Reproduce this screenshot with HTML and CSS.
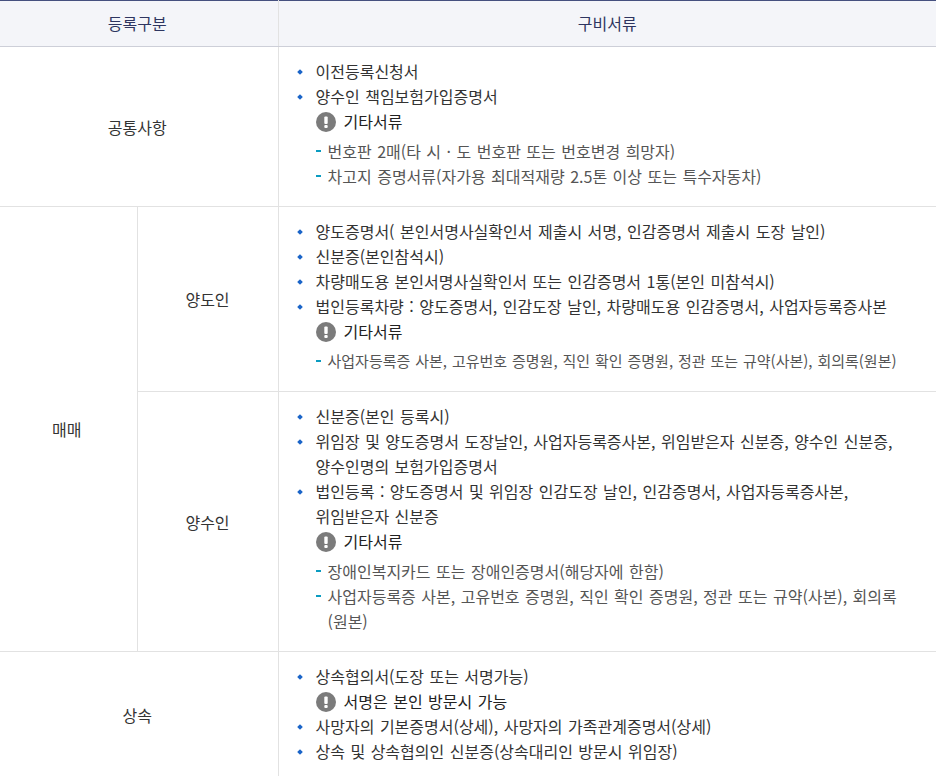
FILE: index.html
```html
<!DOCTYPE html>
<html lang="ko">
<head>
<meta charset="utf-8">
<title>구비서류</title>
<link rel="stylesheet" href="styles.css">
</head>
<body>
<svg class="defs" width="0" height="0" aria-hidden="true"><symbol id="warn" viewBox="0 0 20 20"><circle cx="10" cy="10" r="10" fill="#7b7b7b"/><rect x="8.3" y="4.5" width="3.4" height="7.5" rx="1" fill="#fff"/><rect x="8.3" y="13" width="3.4" height="3" rx="1" fill="#fff"/></symbol></svg>
<table class="docs">
<colgroup><col class="c1"><col class="c2"><col class="c3"></colgroup>
<thead>
<tr><th colspan="2">등록구분</th><th>구비서류</th></tr>
</thead>
<tbody>
<tr>
<td colspan="2" class="label">공통사항</td>
<td class="content">
<ul class="dots"><li>이전등록신청서</li><li>양수인 책임보험가입증명서</li></ul>
<p class="note"><svg class="ic"><use href="#warn"/></svg>기타서류</p>
<ul class="dashes"><li>번호판 2매(타 시 · 도 번호판 또는 번호변경 희망자)</li><li>차고지 증명서류(자가용 최대적재량 2.5톤 이상 또는 특수자동차)</li></ul>
</td>
</tr>
<tr>
<td rowspan="2" class="label">매매</td>
<td class="label bl">양도인</td>
<td class="content">
<ul class="dots"><li>양도증명서( 본인서명사실확인서 제출시 서명, 인감증명서 제출시 도장 날인)</li><li>신분증(본인참석시)</li><li>차량매도용 본인서명사실확인서 또는 인감증명서 1통(본인 미참석시)</li><li>법인등록차량 : 양도증명서, 인감도장 날인, 차량매도용 인감증명서, 사업자등록증사본</li></ul>
<p class="note"><svg class="ic"><use href="#warn"/></svg>기타서류</p>
<ul class="dashes small"><li>사업자등록증 사본, 고유번호 증명원, 직인 확인 증명원, 정관 또는 규약(사본), 회의록(원본)</li></ul>
</td>
</tr>
<tr>
<td class="label bl">양수인</td>
<td class="content">
<ul class="dots"><li>신분증(본인 등록시)</li><li>위임장 및 양도증명서 도장날인, 사업자등록증사본, 위임받은자 신분증, 양수인 신분증,<br>양수인명의 보험가입증명서</li><li>법인등록 : 양도증명서 및 위임장 인감도장 날인, 인감증명서, 사업자등록증사본,<br>위임받은자 신분증</li></ul>
<p class="note"><svg class="ic"><use href="#warn"/></svg>기타서류</p>
<ul class="dashes"><li>장애인복지카드 또는 장애인증명서(해당자에 한함)</li><li>사업자등록증 사본, 고유번호 증명원, 직인 확인 증명원, 정관 또는 규약(사본), 회의록<br>(원본)</li></ul>
</td>
</tr>
<tr>
<td colspan="2" class="label">상속</td>
<td class="content">
<ul class="dots"><li>상속협의서(도장 또는 서명가능)</li></ul>
<p class="note"><svg class="ic"><use href="#warn"/></svg>서명은 본인 방문시 가능</p>
<ul class="dots"><li>사망자의 기본증명서(상세), 사망자의 가족관계증명서(상세)</li><li>상속 및 상속협의인 신분증(상속대리인 방문시 위임장)</li></ul>
</td>
</tr>
</tbody>
</table>
</body>
</html>
```
FILE: styles.css
```css
html, body { margin: 0; padding: 0; background: #fff; }
body { width: 945px; height: 776px; overflow: hidden; font-family: "Noto Sans CJK KR", "Noto Sans", sans-serif; font-size: 16px; color: #333; word-spacing: 1px; }
.defs { position: absolute; }
.docs { width: 936px; border-collapse: collapse; table-layout: fixed; border-top: 1px solid #45507f; }
.c1 { width: 137px; }
.c2 { width: 141px; }
th { height: 43px; padding: 0 0 2px; background: #f4f5f9; font-weight: 400; font-size: 16px; color: #2e3560; text-align: center; border-bottom: 1px solid #cdcfd8; border-left: 1px solid #e2e2e2; }
th:first-child { border-left: 0; padding-right: 3px; }
td { padding: 0; border-bottom: 1px solid #e2e2e2; border-left: 1px solid #e2e2e2; }
td:first-child { border-left: 0; padding-right: 3px; }
td.bl { border-left: 1px solid #e2e2e2; padding-right: 0; }
.label { text-align: center; font-size: 16px; color: #333; }
.content { padding: 12px 18px 13px 18px; line-height: 25px; color: #333; }
ul { list-style: none; margin: 0; padding: 0; }
.dots li { position: relative; padding-left: 19px; }
.dots li::before { content: ""; position: absolute; left: 1px; top: 11px; width: 4px; height: 4px; background: #1a64c8; transform: rotate(45deg); }
.note { margin: 0 0 0 19px; display: flex; align-items: center; color: #222; }
.ic { width: 20px; height: 20px; margin-right: 8px; flex: none; }
.dashes { margin: 5px 0 4px 19px; }
.dashes.small { margin: 4px 0 5px 19px; }
.dashes li { position: relative; padding-left: 12px; color: #555; }
.dashes.small li { font-size: 15px; word-spacing: 0.7px; }
.dashes li::before { content: ""; position: absolute; left: 0; top: 11px; width: 5px; height: 2px; background: #0b9cc1; }
.dashes.small li::before { top: 12px; }
```
